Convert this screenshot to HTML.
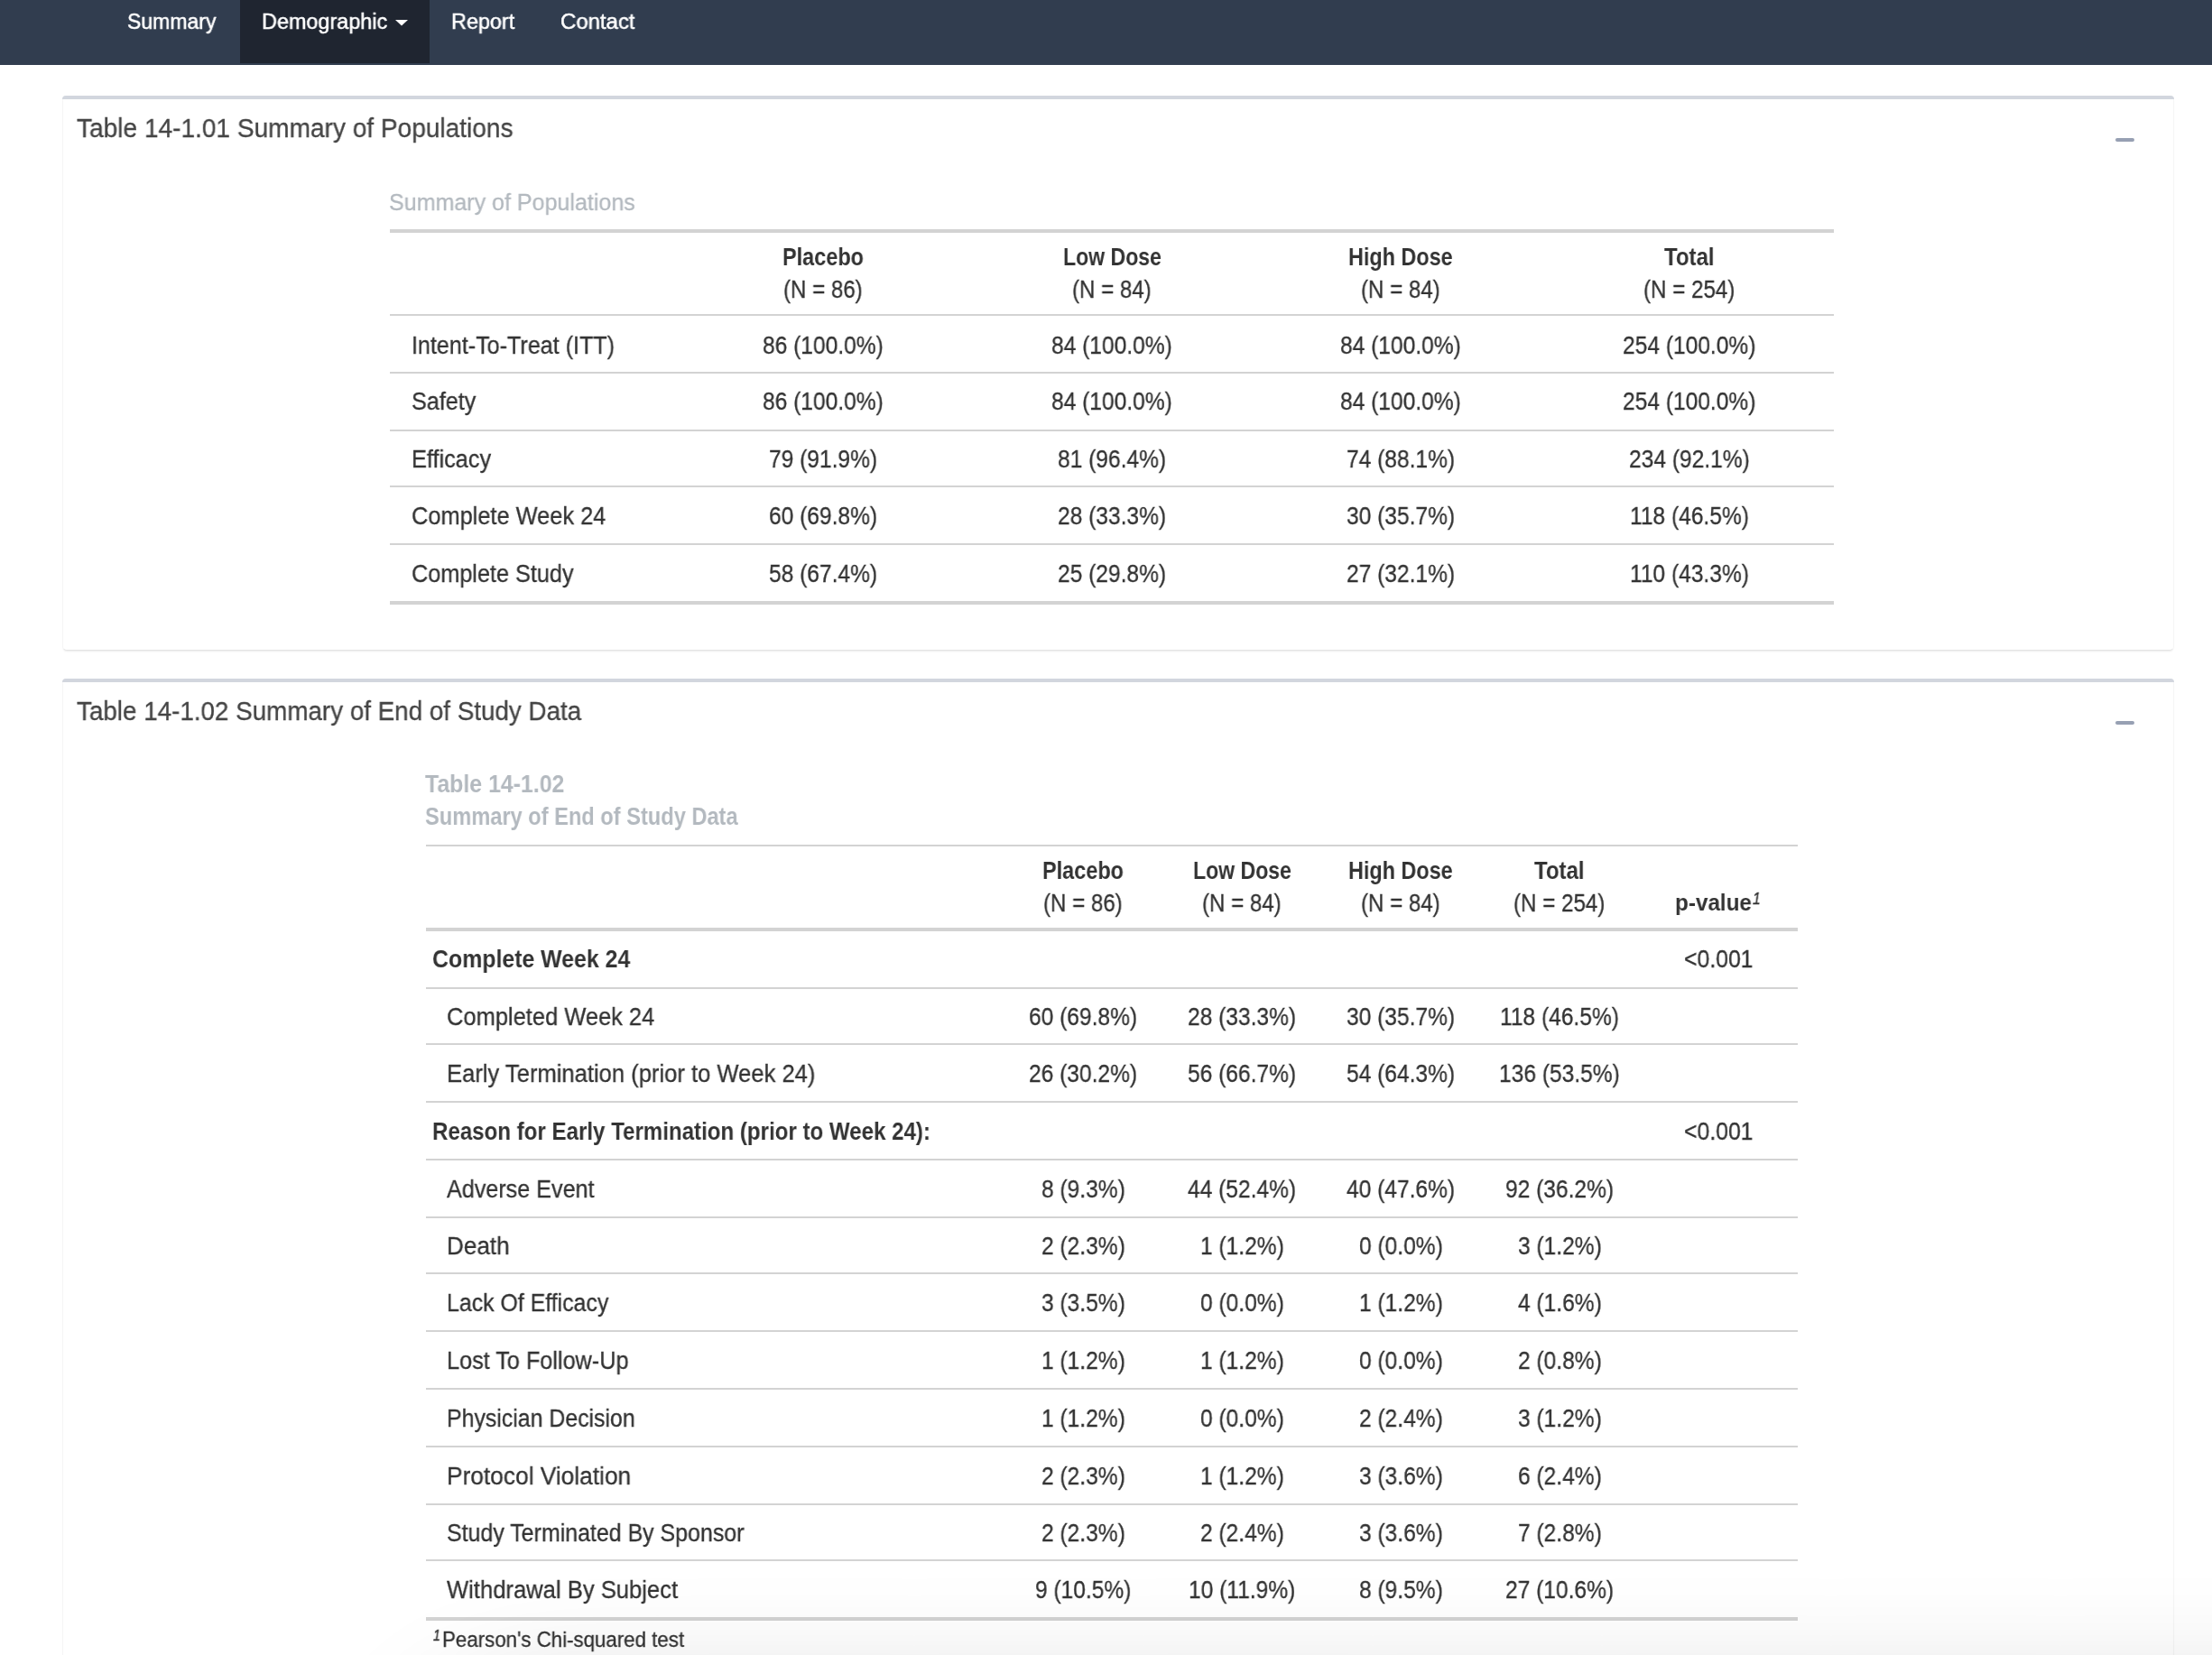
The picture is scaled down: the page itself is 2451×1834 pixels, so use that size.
<!DOCTYPE html>
<html><head><meta charset="utf-8"><title>Summary of Populations</title>
<style>
html,body{margin:0;padding:0;width:2451px;height:1834px;overflow:hidden;background:#fff;font-family:"Liberation Sans",sans-serif;}
.t{position:absolute;white-space:nowrap;transform-origin:0 0;will-change:transform;}
.r{position:absolute;}
.card{position:absolute;box-sizing:border-box;background:#fff;border:1px solid #f6f6f6;border-bottom-color:#e4e4e4;border-radius:5px;box-shadow:0 2px 2px -1px rgba(0,0,0,0.08);}
.shade{position:absolute;left:455px;top:1885px;width:2600px;height:300px;border-radius:160px;box-shadow:0 0 130px 10px rgba(0,0,0,0.17);}
</style></head><body>
<div class="card" style="left:69px;top:106px;width:2340px;height:615px"></div><div class="card" style="left:69px;top:752px;width:2340px;height:1148px"></div>
<div class="r" style="left:0px;top:0px;width:2451px;height:72px;background:#313d4f;"></div>
<div class="r" style="left:266px;top:0px;width:210px;height:70px;background:#1f2530;"></div>
<div class="r" style="left:69px;top:106px;width:2340px;height:4px;background:#d2d6de;border-radius:5px 5px 0 0;"></div>
<div class="r" style="left:2344px;top:153px;width:21px;height:4px;background:#97a0b3;border-radius:2px"></div>
<div class="r" style="left:69px;top:752px;width:2340px;height:4px;background:#d2d6de;border-radius:5px 5px 0 0;"></div>
<div class="r" style="left:2344px;top:799px;width:21px;height:4px;background:#97a0b3;border-radius:2px"></div>
<div class="r" style="left:432px;top:254px;width:1600px;height:4px;background:#d3d3d3;"></div>
<div class="r" style="left:432px;top:348px;width:1600px;height:2px;background:#d3d3d3;"></div>
<div class="r" style="left:432px;top:412px;width:1600px;height:2px;background:#d3d3d3;"></div>
<div class="r" style="left:432px;top:476px;width:1600px;height:2px;background:#d3d3d3;"></div>
<div class="r" style="left:432px;top:538px;width:1600px;height:2px;background:#d3d3d3;"></div>
<div class="r" style="left:432px;top:602px;width:1600px;height:2px;background:#d3d3d3;"></div>
<div class="r" style="left:432px;top:666px;width:1600px;height:4px;background:#d3d3d3;"></div>
<div class="r" style="left:472px;top:936px;width:1520px;height:2px;background:#d3d3d3;"></div>
<div class="r" style="left:472px;top:1028px;width:1520px;height:4px;background:#d3d3d3;"></div>
<div class="r" style="left:472px;top:1094px;width:1520px;height:2px;background:#d3d3d3;"></div>
<div class="r" style="left:472px;top:1156px;width:1520px;height:2px;background:#d3d3d3;"></div>
<div class="r" style="left:472px;top:1220px;width:1520px;height:2px;background:#d3d3d3;"></div>
<div class="r" style="left:472px;top:1284px;width:1520px;height:2px;background:#d3d3d3;"></div>
<div class="r" style="left:472px;top:1348px;width:1520px;height:2px;background:#d3d3d3;"></div>
<div class="r" style="left:472px;top:1410px;width:1520px;height:2px;background:#d3d3d3;"></div>
<div class="r" style="left:472px;top:1474px;width:1520px;height:2px;background:#d3d3d3;"></div>
<div class="r" style="left:472px;top:1538px;width:1520px;height:2px;background:#d3d3d3;"></div>
<div class="r" style="left:472px;top:1602px;width:1520px;height:2px;background:#d3d3d3;"></div>
<div class="r" style="left:472px;top:1666px;width:1520px;height:2px;background:#d3d3d3;"></div>
<div class="r" style="left:472px;top:1728px;width:1520px;height:2px;background:#d3d3d3;"></div>
<div class="r" style="left:472px;top:1792px;width:1520px;height:4px;background:#d3d3d3;"></div>
<svg class="r" style="left:438px;top:22px" width="14" height="7" viewBox="0 0 14 7"><path d="M0 0H14L7 6.5Z" fill="#fff"/></svg>
<div class="t" style="left:141.40px;top:11.73px;font-size:24.419px;line-height:24.419px;color:#fff;transform:scaleX(0.9429);-webkit-text-stroke:0.5px #fff;">Summary</div>
<div class="t" style="left:289.70px;top:11.73px;font-size:24.419px;line-height:24.419px;color:#fff;transform:scaleX(0.9586);-webkit-text-stroke:0.5px #fff;">Demographic</div>
<div class="t" style="left:500.10px;top:11.73px;font-size:24.419px;line-height:24.419px;color:#fff;transform:scaleX(0.9580);-webkit-text-stroke:0.5px #fff;">Report</div>
<div class="t" style="left:620.60px;top:11.73px;font-size:24.419px;line-height:24.419px;color:#fff;transform:scaleX(0.9804);-webkit-text-stroke:0.5px #fff;">Contact</div>
<div class="t" style="left:84.90px;top:127.52px;font-size:28.924px;line-height:28.924px;-webkit-text-stroke:0.3px #444;color:#444;transform:scaleX(0.9707);">Table 14-1.01 Summary of Populations</div>
<div class="t" style="left:430.80px;top:212.40px;font-size:25.872px;line-height:25.872px;-webkit-text-stroke:0.3px #b3b9bf;color:#b3b9bf;transform:scaleX(0.9682);">Summary of Populations</div>
<div class="t" style="left:867.00px;top:271.17px;font-size:27.326px;line-height:27.326px;font-weight:700;color:#333;transform:scaleX(0.8588);">Placebo</div>
<div class="t" style="left:868.15px;top:307.07px;font-size:27.326px;line-height:27.326px;-webkit-text-stroke:0.3px #333;color:#333;transform:scaleX(0.8817);">(N = 86)</div>
<div class="t" style="left:1177.50px;top:271.17px;font-size:27.326px;line-height:27.326px;font-weight:700;color:#333;transform:scaleX(0.8446);">Low Dose</div>
<div class="t" style="left:1188.15px;top:307.07px;font-size:27.326px;line-height:27.326px;-webkit-text-stroke:0.3px #333;color:#333;transform:scaleX(0.8817);">(N = 84)</div>
<div class="t" style="left:1494.15px;top:271.17px;font-size:27.326px;line-height:27.326px;font-weight:700;color:#333;transform:scaleX(0.8562);">High Dose</div>
<div class="t" style="left:1508.15px;top:307.07px;font-size:27.326px;line-height:27.326px;-webkit-text-stroke:0.3px #333;color:#333;transform:scaleX(0.8817);">(N = 84)</div>
<div class="t" style="left:1844.20px;top:271.17px;font-size:27.326px;line-height:27.326px;font-weight:700;color:#333;transform:scaleX(0.8793);">Total</div>
<div class="t" style="left:1821.30px;top:307.07px;font-size:27.326px;line-height:27.326px;-webkit-text-stroke:0.3px #333;color:#333;transform:scaleX(0.8844);">(N = 254)</div>
<div class="t" style="left:455.80px;top:368.87px;font-size:27.326px;line-height:27.326px;-webkit-text-stroke:0.3px #333;color:#333;transform:scaleX(0.9190);">Intent-To-Treat (ITT)</div>
<div class="t" style="left:845.11px;top:368.87px;font-size:27.326px;line-height:27.326px;-webkit-text-stroke:0.3px #333;color:#333;transform:scaleX(0.8987);">86 (100.0%)</div>
<div class="t" style="left:1165.11px;top:368.87px;font-size:27.326px;line-height:27.326px;-webkit-text-stroke:0.3px #333;color:#333;transform:scaleX(0.8987);">84 (100.0%)</div>
<div class="t" style="left:1485.11px;top:368.87px;font-size:27.326px;line-height:27.326px;-webkit-text-stroke:0.3px #333;color:#333;transform:scaleX(0.8987);">84 (100.0%)</div>
<div class="t" style="left:1798.28px;top:368.87px;font-size:27.326px;line-height:27.326px;-webkit-text-stroke:0.3px #333;color:#333;transform:scaleX(0.8987);">254 (100.0%)</div>
<div class="t" style="left:455.80px;top:431.37px;font-size:27.326px;line-height:27.326px;-webkit-text-stroke:0.3px #333;color:#333;transform:scaleX(0.9204);">Safety</div>
<div class="t" style="left:845.11px;top:431.37px;font-size:27.326px;line-height:27.326px;-webkit-text-stroke:0.3px #333;color:#333;transform:scaleX(0.8987);">86 (100.0%)</div>
<div class="t" style="left:1165.11px;top:431.37px;font-size:27.326px;line-height:27.326px;-webkit-text-stroke:0.3px #333;color:#333;transform:scaleX(0.8987);">84 (100.0%)</div>
<div class="t" style="left:1485.11px;top:431.37px;font-size:27.326px;line-height:27.326px;-webkit-text-stroke:0.3px #333;color:#333;transform:scaleX(0.8987);">84 (100.0%)</div>
<div class="t" style="left:1798.28px;top:431.37px;font-size:27.326px;line-height:27.326px;-webkit-text-stroke:0.3px #333;color:#333;transform:scaleX(0.8987);">254 (100.0%)</div>
<div class="t" style="left:455.80px;top:494.87px;font-size:27.326px;line-height:27.326px;-webkit-text-stroke:0.3px #333;color:#333;transform:scaleX(0.9267);">Efficacy</div>
<div class="t" style="left:851.94px;top:494.87px;font-size:27.326px;line-height:27.326px;-webkit-text-stroke:0.3px #333;color:#333;transform:scaleX(0.8987);">79 (91.9%)</div>
<div class="t" style="left:1171.94px;top:494.87px;font-size:27.326px;line-height:27.326px;-webkit-text-stroke:0.3px #333;color:#333;transform:scaleX(0.8987);">81 (96.4%)</div>
<div class="t" style="left:1491.94px;top:494.87px;font-size:27.326px;line-height:27.326px;-webkit-text-stroke:0.3px #333;color:#333;transform:scaleX(0.8987);">74 (88.1%)</div>
<div class="t" style="left:1805.11px;top:494.87px;font-size:27.326px;line-height:27.326px;-webkit-text-stroke:0.3px #333;color:#333;transform:scaleX(0.8987);">234 (92.1%)</div>
<div class="t" style="left:455.80px;top:558.37px;font-size:27.326px;line-height:27.326px;-webkit-text-stroke:0.3px #333;color:#333;transform:scaleX(0.9289);">Complete Week 24</div>
<div class="t" style="left:851.94px;top:558.37px;font-size:27.326px;line-height:27.326px;-webkit-text-stroke:0.3px #333;color:#333;transform:scaleX(0.8987);">60 (69.8%)</div>
<div class="t" style="left:1171.94px;top:558.37px;font-size:27.326px;line-height:27.326px;-webkit-text-stroke:0.3px #333;color:#333;transform:scaleX(0.8987);">28 (33.3%)</div>
<div class="t" style="left:1491.94px;top:558.37px;font-size:27.326px;line-height:27.326px;-webkit-text-stroke:0.3px #333;color:#333;transform:scaleX(0.8987);">30 (35.7%)</div>
<div class="t" style="left:1806.02px;top:558.37px;font-size:27.326px;line-height:27.326px;-webkit-text-stroke:0.3px #333;color:#333;transform:scaleX(0.8987);">118 (46.5%)</div>
<div class="t" style="left:455.80px;top:622.37px;font-size:27.326px;line-height:27.326px;-webkit-text-stroke:0.3px #333;color:#333;transform:scaleX(0.9238);">Complete Study</div>
<div class="t" style="left:851.94px;top:622.37px;font-size:27.326px;line-height:27.326px;-webkit-text-stroke:0.3px #333;color:#333;transform:scaleX(0.8987);">58 (67.4%)</div>
<div class="t" style="left:1171.94px;top:622.37px;font-size:27.326px;line-height:27.326px;-webkit-text-stroke:0.3px #333;color:#333;transform:scaleX(0.8987);">25 (29.8%)</div>
<div class="t" style="left:1491.94px;top:622.37px;font-size:27.326px;line-height:27.326px;-webkit-text-stroke:0.3px #333;color:#333;transform:scaleX(0.8987);">27 (32.1%)</div>
<div class="t" style="left:1806.02px;top:622.37px;font-size:27.326px;line-height:27.326px;-webkit-text-stroke:0.3px #333;color:#333;transform:scaleX(0.8987);">110 (43.3%)</div>
<div class="t" style="left:84.90px;top:773.52px;font-size:28.924px;line-height:28.924px;-webkit-text-stroke:0.3px #444;color:#444;transform:scaleX(0.9614);">Table 14-1.02 Summary of End of Study Data</div>
<div class="t" style="left:471.20px;top:854.87px;font-size:27.326px;line-height:27.326px;font-weight:700;color:#b3b9bf;transform:scaleX(0.9109);">Table 14-1.02</div>
<div class="t" style="left:471.20px;top:891.27px;font-size:27.326px;line-height:27.326px;font-weight:700;color:#b3b9bf;transform:scaleX(0.8651);">Summary of End of Study Data</div>
<div class="t" style="left:1155.00px;top:950.67px;font-size:27.326px;line-height:27.326px;font-weight:700;color:#333;transform:scaleX(0.8588);">Placebo</div>
<div class="t" style="left:1156.15px;top:986.87px;font-size:27.326px;line-height:27.326px;-webkit-text-stroke:0.3px #333;color:#333;transform:scaleX(0.8817);">(N = 86)</div>
<div class="t" style="left:1321.50px;top:950.67px;font-size:27.326px;line-height:27.326px;font-weight:700;color:#333;transform:scaleX(0.8446);">Low Dose</div>
<div class="t" style="left:1332.15px;top:986.87px;font-size:27.326px;line-height:27.326px;-webkit-text-stroke:0.3px #333;color:#333;transform:scaleX(0.8817);">(N = 84)</div>
<div class="t" style="left:1494.15px;top:950.67px;font-size:27.326px;line-height:27.326px;font-weight:700;color:#333;transform:scaleX(0.8562);">High Dose</div>
<div class="t" style="left:1508.15px;top:986.87px;font-size:27.326px;line-height:27.326px;-webkit-text-stroke:0.3px #333;color:#333;transform:scaleX(0.8817);">(N = 84)</div>
<div class="t" style="left:1700.20px;top:950.67px;font-size:27.326px;line-height:27.326px;font-weight:700;color:#333;transform:scaleX(0.8793);">Total</div>
<div class="t" style="left:1677.30px;top:986.87px;font-size:27.326px;line-height:27.326px;-webkit-text-stroke:0.3px #333;color:#333;transform:scaleX(0.8844);">(N = 254)</div>
<div class="t" style="left:1855.60px;top:987.41px;font-size:26.453px;line-height:26.453px;font-weight:700;color:#333;transform:scaleX(0.9178);">p-value</div>
<div class="t" style="left:1942.09px;top:988.44px;font-size:17.442px;line-height:17.442px;-webkit-text-stroke:0.4px #333;color:#333;transform:scaleX(0.8987);font-style:italic;">1</div>
<div class="t" style="left:479.20px;top:1049.37px;font-size:27.326px;line-height:27.326px;font-weight:700;color:#333;transform:scaleX(0.9101);">Complete Week 24</div>
<div class="t" style="left:1865.70px;top:1049.37px;font-size:27.326px;line-height:27.326px;-webkit-text-stroke:0.3px #333;color:#333;transform:scaleX(0.9084);">&lt;0.001</div>
<div class="t" style="left:495.00px;top:1112.87px;font-size:27.326px;line-height:27.326px;-webkit-text-stroke:0.3px #333;color:#333;transform:scaleX(0.9325);">Completed Week 24</div>
<div class="t" style="left:1139.94px;top:1112.87px;font-size:27.326px;line-height:27.326px;-webkit-text-stroke:0.3px #333;color:#333;transform:scaleX(0.8987);">60 (69.8%)</div>
<div class="t" style="left:1315.94px;top:1112.87px;font-size:27.326px;line-height:27.326px;-webkit-text-stroke:0.3px #333;color:#333;transform:scaleX(0.8987);">28 (33.3%)</div>
<div class="t" style="left:1491.94px;top:1112.87px;font-size:27.326px;line-height:27.326px;-webkit-text-stroke:0.3px #333;color:#333;transform:scaleX(0.8987);">30 (35.7%)</div>
<div class="t" style="left:1662.02px;top:1112.87px;font-size:27.326px;line-height:27.326px;-webkit-text-stroke:0.3px #333;color:#333;transform:scaleX(0.8987);">118 (46.5%)</div>
<div class="t" style="left:495.00px;top:1175.87px;font-size:27.326px;line-height:27.326px;-webkit-text-stroke:0.3px #333;color:#333;transform:scaleX(0.9364);">Early Termination (prior to Week 24)</div>
<div class="t" style="left:1139.94px;top:1175.87px;font-size:27.326px;line-height:27.326px;-webkit-text-stroke:0.3px #333;color:#333;transform:scaleX(0.8987);">26 (30.2%)</div>
<div class="t" style="left:1315.94px;top:1175.87px;font-size:27.326px;line-height:27.326px;-webkit-text-stroke:0.3px #333;color:#333;transform:scaleX(0.8987);">56 (66.7%)</div>
<div class="t" style="left:1491.94px;top:1175.87px;font-size:27.326px;line-height:27.326px;-webkit-text-stroke:0.3px #333;color:#333;transform:scaleX(0.8987);">54 (64.3%)</div>
<div class="t" style="left:1661.11px;top:1175.87px;font-size:27.326px;line-height:27.326px;-webkit-text-stroke:0.3px #333;color:#333;transform:scaleX(0.8987);">136 (53.5%)</div>
<div class="t" style="left:479.20px;top:1239.87px;font-size:27.326px;line-height:27.326px;font-weight:700;color:#333;transform:scaleX(0.8820);">Reason for Early Termination (prior to Week 24):</div>
<div class="t" style="left:1865.70px;top:1239.87px;font-size:27.326px;line-height:27.326px;-webkit-text-stroke:0.3px #333;color:#333;transform:scaleX(0.9084);">&lt;0.001</div>
<div class="t" style="left:495.00px;top:1303.87px;font-size:27.326px;line-height:27.326px;-webkit-text-stroke:0.3px #333;color:#333;transform:scaleX(0.9207);">Adverse Event</div>
<div class="t" style="left:1153.60px;top:1303.87px;font-size:27.326px;line-height:27.326px;-webkit-text-stroke:0.3px #333;color:#333;transform:scaleX(0.8987);">8 (9.3%)</div>
<div class="t" style="left:1315.94px;top:1303.87px;font-size:27.326px;line-height:27.326px;-webkit-text-stroke:0.3px #333;color:#333;transform:scaleX(0.8987);">44 (52.4%)</div>
<div class="t" style="left:1491.94px;top:1303.87px;font-size:27.326px;line-height:27.326px;-webkit-text-stroke:0.3px #333;color:#333;transform:scaleX(0.8987);">40 (47.6%)</div>
<div class="t" style="left:1667.94px;top:1303.87px;font-size:27.326px;line-height:27.326px;-webkit-text-stroke:0.3px #333;color:#333;transform:scaleX(0.8987);">92 (36.2%)</div>
<div class="t" style="left:495.00px;top:1366.87px;font-size:27.326px;line-height:27.326px;-webkit-text-stroke:0.3px #333;color:#333;transform:scaleX(0.9547);">Death</div>
<div class="t" style="left:1153.60px;top:1366.87px;font-size:27.326px;line-height:27.326px;-webkit-text-stroke:0.3px #333;color:#333;transform:scaleX(0.8987);">2 (2.3%)</div>
<div class="t" style="left:1329.60px;top:1366.87px;font-size:27.326px;line-height:27.326px;-webkit-text-stroke:0.3px #333;color:#333;transform:scaleX(0.8987);">1 (1.2%)</div>
<div class="t" style="left:1505.60px;top:1366.87px;font-size:27.326px;line-height:27.326px;-webkit-text-stroke:0.3px #333;color:#333;transform:scaleX(0.8987);">0 (0.0%)</div>
<div class="t" style="left:1681.60px;top:1366.87px;font-size:27.326px;line-height:27.326px;-webkit-text-stroke:0.3px #333;color:#333;transform:scaleX(0.8987);">3 (1.2%)</div>
<div class="t" style="left:495.00px;top:1429.87px;font-size:27.326px;line-height:27.326px;-webkit-text-stroke:0.3px #333;color:#333;transform:scaleX(0.9110);">Lack Of Efficacy</div>
<div class="t" style="left:1153.60px;top:1429.87px;font-size:27.326px;line-height:27.326px;-webkit-text-stroke:0.3px #333;color:#333;transform:scaleX(0.8987);">3 (3.5%)</div>
<div class="t" style="left:1329.60px;top:1429.87px;font-size:27.326px;line-height:27.326px;-webkit-text-stroke:0.3px #333;color:#333;transform:scaleX(0.8987);">0 (0.0%)</div>
<div class="t" style="left:1505.60px;top:1429.87px;font-size:27.326px;line-height:27.326px;-webkit-text-stroke:0.3px #333;color:#333;transform:scaleX(0.8987);">1 (1.2%)</div>
<div class="t" style="left:1681.60px;top:1429.87px;font-size:27.326px;line-height:27.326px;-webkit-text-stroke:0.3px #333;color:#333;transform:scaleX(0.8987);">4 (1.6%)</div>
<div class="t" style="left:495.00px;top:1493.87px;font-size:27.326px;line-height:27.326px;-webkit-text-stroke:0.3px #333;color:#333;transform:scaleX(0.9239);">Lost To Follow-Up</div>
<div class="t" style="left:1153.60px;top:1493.87px;font-size:27.326px;line-height:27.326px;-webkit-text-stroke:0.3px #333;color:#333;transform:scaleX(0.8987);">1 (1.2%)</div>
<div class="t" style="left:1329.60px;top:1493.87px;font-size:27.326px;line-height:27.326px;-webkit-text-stroke:0.3px #333;color:#333;transform:scaleX(0.8987);">1 (1.2%)</div>
<div class="t" style="left:1505.60px;top:1493.87px;font-size:27.326px;line-height:27.326px;-webkit-text-stroke:0.3px #333;color:#333;transform:scaleX(0.8987);">0 (0.0%)</div>
<div class="t" style="left:1681.60px;top:1493.87px;font-size:27.326px;line-height:27.326px;-webkit-text-stroke:0.3px #333;color:#333;transform:scaleX(0.8987);">2 (0.8%)</div>
<div class="t" style="left:495.00px;top:1557.87px;font-size:27.326px;line-height:27.326px;-webkit-text-stroke:0.3px #333;color:#333;transform:scaleX(0.9104);">Physician Decision</div>
<div class="t" style="left:1153.60px;top:1557.87px;font-size:27.326px;line-height:27.326px;-webkit-text-stroke:0.3px #333;color:#333;transform:scaleX(0.8987);">1 (1.2%)</div>
<div class="t" style="left:1329.60px;top:1557.87px;font-size:27.326px;line-height:27.326px;-webkit-text-stroke:0.3px #333;color:#333;transform:scaleX(0.8987);">0 (0.0%)</div>
<div class="t" style="left:1505.60px;top:1557.87px;font-size:27.326px;line-height:27.326px;-webkit-text-stroke:0.3px #333;color:#333;transform:scaleX(0.8987);">2 (2.4%)</div>
<div class="t" style="left:1681.60px;top:1557.87px;font-size:27.326px;line-height:27.326px;-webkit-text-stroke:0.3px #333;color:#333;transform:scaleX(0.8987);">3 (1.2%)</div>
<div class="t" style="left:495.00px;top:1621.87px;font-size:27.326px;line-height:27.326px;-webkit-text-stroke:0.3px #333;color:#333;transform:scaleX(0.9630);">Protocol Violation</div>
<div class="t" style="left:1153.60px;top:1621.87px;font-size:27.326px;line-height:27.326px;-webkit-text-stroke:0.3px #333;color:#333;transform:scaleX(0.8987);">2 (2.3%)</div>
<div class="t" style="left:1329.60px;top:1621.87px;font-size:27.326px;line-height:27.326px;-webkit-text-stroke:0.3px #333;color:#333;transform:scaleX(0.8987);">1 (1.2%)</div>
<div class="t" style="left:1505.60px;top:1621.87px;font-size:27.326px;line-height:27.326px;-webkit-text-stroke:0.3px #333;color:#333;transform:scaleX(0.8987);">3 (3.6%)</div>
<div class="t" style="left:1681.60px;top:1621.87px;font-size:27.326px;line-height:27.326px;-webkit-text-stroke:0.3px #333;color:#333;transform:scaleX(0.8987);">6 (2.4%)</div>
<div class="t" style="left:495.00px;top:1684.87px;font-size:27.326px;line-height:27.326px;-webkit-text-stroke:0.3px #333;color:#333;transform:scaleX(0.9130);">Study Terminated By Sponsor</div>
<div class="t" style="left:1153.60px;top:1684.87px;font-size:27.326px;line-height:27.326px;-webkit-text-stroke:0.3px #333;color:#333;transform:scaleX(0.8987);">2 (2.3%)</div>
<div class="t" style="left:1329.60px;top:1684.87px;font-size:27.326px;line-height:27.326px;-webkit-text-stroke:0.3px #333;color:#333;transform:scaleX(0.8987);">2 (2.4%)</div>
<div class="t" style="left:1505.60px;top:1684.87px;font-size:27.326px;line-height:27.326px;-webkit-text-stroke:0.3px #333;color:#333;transform:scaleX(0.8987);">3 (3.6%)</div>
<div class="t" style="left:1681.60px;top:1684.87px;font-size:27.326px;line-height:27.326px;-webkit-text-stroke:0.3px #333;color:#333;transform:scaleX(0.8987);">7 (2.8%)</div>
<div class="t" style="left:495.00px;top:1748.37px;font-size:27.326px;line-height:27.326px;-webkit-text-stroke:0.3px #333;color:#333;transform:scaleX(0.9372);">Withdrawal By Subject</div>
<div class="t" style="left:1146.77px;top:1748.37px;font-size:27.326px;line-height:27.326px;-webkit-text-stroke:0.3px #333;color:#333;transform:scaleX(0.8987);">9 (10.5%)</div>
<div class="t" style="left:1316.86px;top:1748.37px;font-size:27.326px;line-height:27.326px;-webkit-text-stroke:0.3px #333;color:#333;transform:scaleX(0.8987);">10 (11.9%)</div>
<div class="t" style="left:1505.60px;top:1748.37px;font-size:27.326px;line-height:27.326px;-webkit-text-stroke:0.3px #333;color:#333;transform:scaleX(0.8987);">8 (9.5%)</div>
<div class="t" style="left:1667.94px;top:1748.37px;font-size:27.326px;line-height:27.326px;-webkit-text-stroke:0.3px #333;color:#333;transform:scaleX(0.8987);">27 (10.6%)</div>
<div class="t" style="left:480.00px;top:1804.91px;font-size:15.698px;line-height:15.698px;-webkit-text-stroke:0.4px #333;color:#333;transform:scaleX(0.8987);font-style:italic;">1</div>
<div class="t" style="left:490.20px;top:1805.64px;font-size:23.692px;line-height:23.692px;-webkit-text-stroke:0.3px #333;color:#333;transform:scaleX(0.9410);">Pearson&#x27;s Chi-squared test</div>
<div class="shade"></div>
</body></html>
